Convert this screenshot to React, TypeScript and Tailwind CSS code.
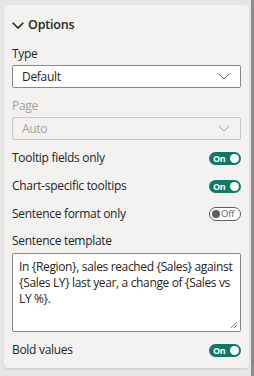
import React from "react";

const font = { fontFamily: '"Segoe UI", "Open Sans", "Noto Sans", sans-serif' };

function Chevron({ className = "", color = "#252423", sw = 1 }: { className?: string; color?: string; sw?: number }) {
  return (
    <svg width="12" height="7" viewBox="0 0 12 7" className={className}>
      <path d="M0.7 0.8 L6 6 L11.3 0.8" fill="none" stroke={color} strokeWidth={sw} />
    </svg>
  );
}

function Toggle({ on }: { on: boolean }) {
  if (on) {
    return (
      <div className="w-[32px] h-[13px] rounded-full bg-[#117865] flex items-center justify-between pl-[4px] pr-[2px]">
        <span className="text-white text-[9px] font-bold leading-none tracking-[-0.3px]">On</span>
        <span className="w-[9px] h-[9px] rounded-full bg-white" />
      </div>
    );
  }
  return (
    <div className="w-[32px] h-[14px] rounded-full border border-[#605e5c] bg-white flex items-center pl-[2px] pr-[3px] gap-[1px]">
      <span className="w-[8px] h-[8px] rounded-full bg-[#605e5c]" />
      <span className="text-[#605e5c] text-[9.5px] leading-none tracking-[-0.2px]">Off</span>
    </div>
  );
}

function ToggleRow({ label, on, h }: { label: string; on: boolean; h: string }) {
  return (
    <div className={`flex items-center justify-between pr-[8px] ${h}`}>
      <span className="text-[12px] tracking-[-0.3px] text-[#252423]">{label}</span>
      <Toggle on={on} />
    </div>
  );
}

export default function App() {
  return (
    <div className="w-[254px] h-[376px] bg-[#e6e6e6] relative overflow-hidden" style={font}>
      <div className="absolute right-0 top-0 w-[3px] h-full bg-[#8a8a8a]" />
      <div className="ml-[4px] mt-[5px] w-[245px] h-[363px] bg-[#f3f2f1] rounded-[4px] pl-[8px] flex flex-col shadow-[0_1px_2px_rgba(0,0,0,0.12)]">
        <div className="h-[40px] flex items-center gap-[4px]">
          <Chevron sw={1.6} />
          <span className="text-[12.5px] font-semibold tracking-[-0.2px] text-[#252423]">Options</span>
        </div>
        <div className="h-[18px] flex items-center text-[12px] tracking-[-0.3px] text-[#252423]">Type</div>
        <div className="mt-[2px] mr-[8px] h-[23px] border border-[#8a8886] bg-white rounded-[2px] flex items-center justify-between pl-[9px] pr-[10px]">
          <span className="text-[12px] tracking-[-0.3px] text-[#252423]">Default</span>
          <Chevron color="#605e5c" />
        </div>
        <div className="mt-[9px] h-[18px] flex items-center text-[12px] tracking-[-0.3px] text-[#a19f9d]">Page</div>
        <div className="mt-[2px] mr-[8px] h-[23px] border border-[#c8c6c4] bg-[#f3f2f1] rounded-[2px] flex items-center justify-between pl-[9px] pr-[10px]">
          <span className="text-[12px] tracking-[-0.3px] text-[#a19f9d]">Auto</span>
          <Chevron color="#a19f9d" />
        </div>
        <div className="mt-[4px]">
          <ToggleRow label="Tooltip fields only" on={true} h="h-[28px]" />
          <ToggleRow label="Chart-specific tooltips" on={true} h="h-[28px]" />
          <ToggleRow label="Sentence format only" on={false} h="h-[27px]" />
        </div>
        <div className="mt-[5px] h-[18px] flex items-center text-[12px] tracking-[-0.3px] text-[#252423]">Sentence template</div>
        <div className="mt-[3px] mr-[8px] h-[79px] border border-[#8a8886] bg-white rounded-[2px] relative pl-[6px] pr-[2px] pt-[5px] flex flex-col">
          <div className="h-[16px] flex items-center text-[12px] tracking-[-0.35px] text-[#252423] whitespace-nowrap">In {"{Region}"}, sales reached {"{Sales}"} against</div>
          <div className="h-[16px] flex items-center text-[12px] tracking-[-0.35px] text-[#252423] whitespace-nowrap">{"{Sales LY}"} last year, a change of {"{Sales vs"}</div>
          <div className="h-[16px] flex items-center text-[12px] tracking-[-0.35px] text-[#252423] whitespace-nowrap">{"LY %}."}</div>
          <svg width="8" height="8" viewBox="0 0 8 8" className="absolute right-[2px] bottom-[2px]">
            <path d="M7 1 L1 7 M7 4 L4 7" stroke="#605e5c" strokeWidth="0.8" />
          </svg>
        </div>
        <div className="mt-[9px]">
          <ToggleRow label="Bold values" on={true} h="h-[18px]" />
        </div>
      </div>
    </div>
  );
}
